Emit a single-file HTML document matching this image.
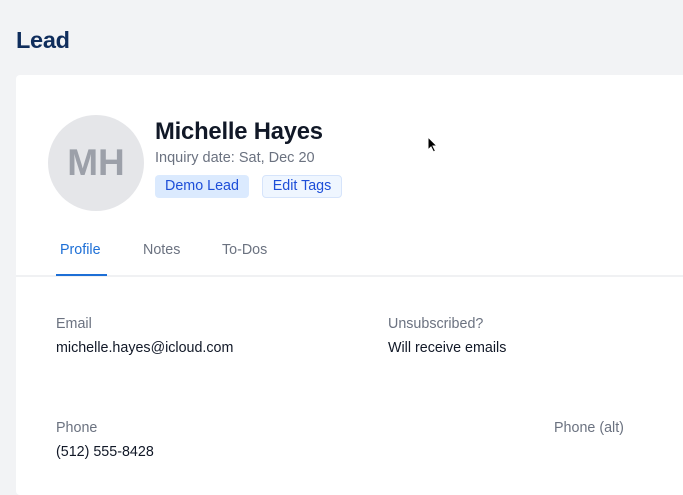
<!DOCTYPE html>
<html><head><style>
*{margin:0;padding:0;box-sizing:border-box}
body{width:683px;height:472px;overflow:hidden;background:#f2f3f5;font-family:"Liberation Sans",sans-serif;position:relative}
.a{position:absolute;white-space:nowrap}
.t{font-size:14.3px}
</style></head><body>
<div class="a" style="left:16px;top:27px;font-size:23.5px;font-weight:bold;color:#0f2d5c;letter-spacing:-0.3px">Lead</div>
<div class="a" style="left:16px;top:75px;width:700px;height:420px;background:#fff;border-radius:4px"></div>
<div class="a" style="left:48px;top:115px;width:96px;height:96px;border-radius:50%;background:#e5e6e9"></div>
<div class="a" style="left:48px;top:143px;width:96px;text-align:center;font-size:37px;font-weight:bold;color:#9ca0a9;line-height:40px">MH</div>
<div class="a" style="left:155px;top:118px;font-size:23.8px;font-weight:bold;color:#111827;letter-spacing:-0.2px">Michelle Hayes</div>
<div class="a t" style="left:155px;top:150px;font-size:14.5px;color:#6b7280">Inquiry date: Sat, Dec 20</div>
<div class="a t" style="left:155px;top:175px;width:94px;height:23px;background:#dbeafe;border-radius:4px;color:#1d4ed8;text-align:center;line-height:23px">Demo Lead</div>
<div class="a t" style="left:262px;top:175px;width:80px;height:23px;background:#eff6ff;border:1px solid #d6e4fb;border-radius:4px;color:#1d4ed8;text-align:center;line-height:21px">Edit Tags</div>
<div class="a t" style="left:60px;top:242px;color:#1d6fd6">Profile</div>
<div class="a t" style="left:143px;top:242px;color:#6b7280">Notes</div>
<div class="a t" style="left:222px;top:242px;color:#6b7280">To-Dos</div>
<div class="a" style="left:16px;top:275px;width:700px;height:2px;background:#f0f1f3"></div>
<div class="a" style="left:56px;top:274px;width:51px;height:2px;background:#1d6fd6"></div>
<div class="a t" style="left:56px;top:316px;color:#6b7280">Email</div>
<div class="a t" style="left:56px;top:340px;color:#111827">michelle.hayes@icloud.com</div>
<div class="a t" style="left:388px;top:316px;color:#6b7280">Unsubscribed?</div>
<div class="a t" style="left:388px;top:340px;color:#111827">Will receive emails</div>
<div class="a t" style="left:56px;top:420px;color:#6b7280">Phone</div>
<div class="a t" style="left:56px;top:444px;color:#111827">(512) 555-8428</div>
<div class="a t" style="left:554px;top:420px;color:#6b7280">Phone (alt)</div>
<svg class="a" style="left:427px;top:136px" width="12" height="18" viewBox="0 0 12 18"><path d="M1 1V14L4 11L6.5 16L8.5 15L6 10H10Z" fill="#000" stroke="#fff" stroke-width="1"/></svg>
</body></html>
